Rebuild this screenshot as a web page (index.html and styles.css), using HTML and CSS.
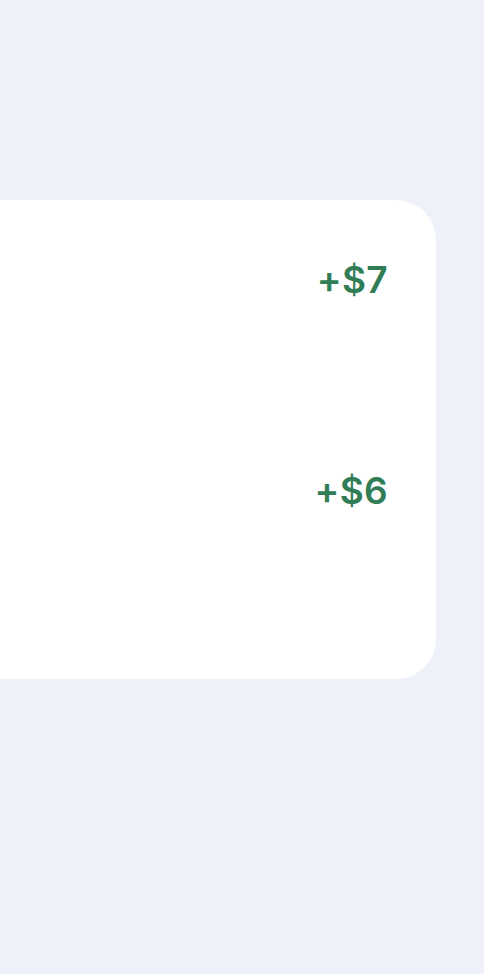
FILE: index.html
```html
<!DOCTYPE html>
<html lang="en-US">

<head>
  <meta charset="utf-8" />
  <title>Rewards</title>
  <link rel="stylesheet" href="styles.css">
</head>

<body>
  <main class="card">
    <div class="row">
      <span class="amount">+$7</span>
    </div>
    <div class="row">
      <span class="amount">+$6</span>
    </div>
  </main>
</body>

</html>
```

FILE: styles.css
```css
html,
body {
  margin: 0;
  background-color: #eef1f9;
  font-family: Inter, "Noto Sans", sans-serif;
}

body {
  padding: 200px 48px 0 0;
  overflow: hidden;
}

.card {
  margin-left: -40px;
  height: 479px;
  box-sizing: border-box;
  padding: 40px 48px 0 0;
  background-color: #fff;
  border-radius: 40px;
}

.row {
  display: flex;
  justify-content: flex-end;
  align-items: center;
  height: 78px;
  margin-bottom: 133px;
}

.amount {
  color: #317d56;
  font-size: 37px;
  font-weight: 600;
  letter-spacing: 0.3px;
}
```
